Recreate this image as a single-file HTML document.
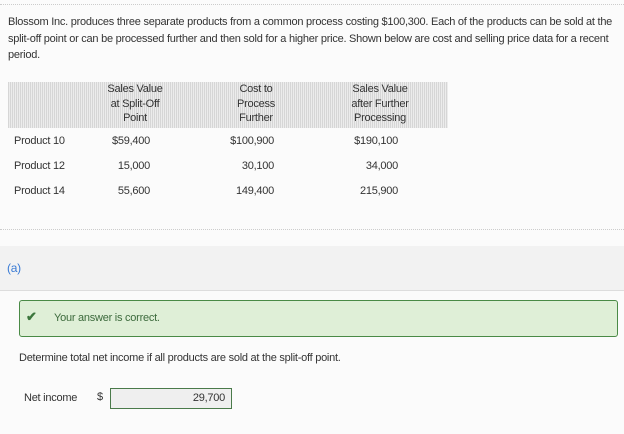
<!DOCTYPE html>
<html><head><style>
body{margin:0;width:624px;height:434px;background:#fbfbfb;font-family:"Liberation Sans",sans-serif;font-size:11px;color:#333;position:relative;overflow:hidden;letter-spacing:-0.25px}
.a{position:absolute;white-space:nowrap}
.th{position:absolute;top:82px;left:8px;width:440px;height:46px;background:repeating-linear-gradient(90deg,#d6d6d6 0 1px,#ececec 1px 2px)}
.h{position:absolute;text-align:center;line-height:14.5px;color:#333;top:82px}
.r{position:absolute;text-align:right}
</style></head><body>
<div class="a" style="top:4px;left:0;width:624px;border-top:1px dotted #ccc"></div>
<div class="a" style="left:8px;top:14px;line-height:16.5px">Blossom Inc. produces three separate products from a common process costing $100,300. Each of the products can be sold at the<br>split-off point or can be processed further and then sold for a higher price. Shown below are cost and selling price data for a recent<br>period.</div>
<div class="th"></div>
<div class="h" style="left:95px;width:80px">Sales Value<br>at Split-Off<br>Point</div>
<div class="h" style="left:216px;width:80px">Cost to<br>Process<br>Further</div>
<div class="h" style="left:340px;width:80px">Sales Value<br>after Further<br>Processing</div>
<div class="a" style="left:14px;top:135px">Product 10</div>
<div class="a" style="left:14px;top:160px">Product 12</div>
<div class="a" style="left:14px;top:185px">Product 14</div>
<div class="r" style="right:474px;top:135px">$59,400</div>
<div class="r" style="right:474px;top:160px">15,000</div>
<div class="r" style="right:474px;top:185px">55,600</div>
<div class="r" style="right:350px;top:135px">$100,900</div>
<div class="r" style="right:350px;top:160px">30,100</div>
<div class="r" style="right:350px;top:185px">149,400</div>
<div class="r" style="right:226px;top:135px">$190,100</div>
<div class="r" style="right:226px;top:160px">34,000</div>
<div class="r" style="right:226px;top:185px">215,900</div>
<div class="a" style="top:229px;left:0;width:624px;border-top:1px dotted #ccc"></div>
<div class="a" style="top:246px;left:0;width:624px;height:44px;background:#f2f2f2;border-bottom:1px solid #ddd"></div>
<div class="a" style="left:7px;top:261px;color:#3a7bd5;font-size:12px">(a)</div>
<div class="a" style="left:19px;top:300px;width:597px;height:35px;background:#dfefd7;border:1px solid #4a8a46;border-radius:3px"></div>
<div class="a" style="left:26px;top:309px;color:#3c763d;font-size:13px;font-weight:bold">✔</div>
<div class="a" style="left:54px;top:312px;color:#3c6a3c">Your answer is correct.</div>
<div class="a" style="left:19px;top:352px">Determine total net income if all products are sold at the split-off point.</div>
<div class="a" style="left:24px;top:392px">Net income</div>
<div class="a" style="left:97px;top:391px">$</div>
<div class="a" style="left:110px;top:388px;width:120px;height:19px;border:1px solid #4a7a4a;background:#efefef;text-align:right;line-height:19px"><span style="padding-right:6px">29,700</span></div>
</body></html>
